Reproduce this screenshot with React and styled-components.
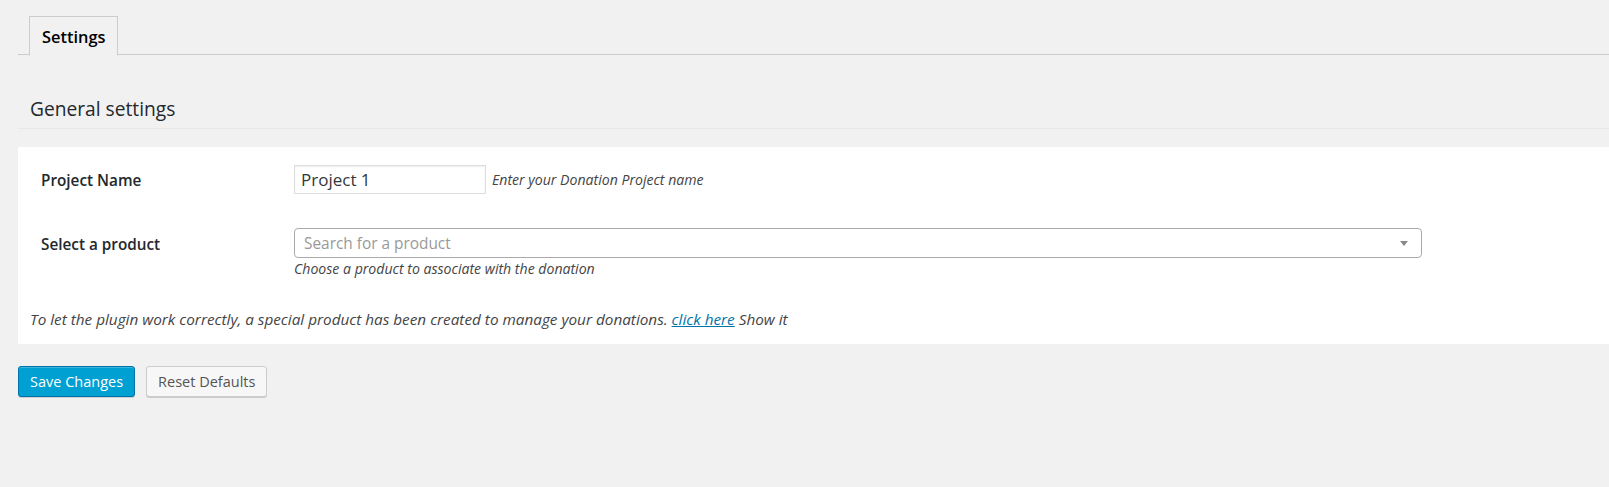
import styled, { createGlobalStyle } from "styled-components";

const GlobalStyle = createGlobalStyle`
  body {
    margin: 0;
    background: #f1f1f1;
    font-family: "Open Sans", "Liberation Sans", sans-serif;
    color: #23282d;
  }
`;

export default function App() {
  return (
    <Page>
      <GlobalStyle />
      <TabBar>
        <Tab $active>Settings</Tab>
      </TabBar>
      <SectionTitle>General settings</SectionTitle>
      <Panel>
        <FieldRow>
          <Label>Project Name</Label>
          <FieldCell>
            <TextInput defaultValue="Project 1" />
            <InlineHint>Enter your Donation Project name</InlineHint>
          </FieldCell>
        </FieldRow>
        <FieldRow $spaced>
          <Label $offset>Select a product</Label>
          <FieldColumn>
            <SelectBox>
              <Placeholder>Search for a product</Placeholder>
              <Arrow />
            </SelectBox>
            <Hint>Choose a product to associate with the donation</Hint>
          </FieldColumn>
        </FieldRow>
        <Notice>
          To let the plugin work correctly, a special product has been created
          to manage your donations. <Link href="#">click here</Link> Show it
        </Notice>
      </Panel>
      <Actions>
        <Button $primary>Save Changes</Button>
        <Button>Reset Defaults</Button>
      </Actions>
    </Page>
  );
}

const Page = styled.div`
  padding: 16px 0 40px 18px;
  min-height: 487px;
  box-sizing: border-box;
`;

const TabBar = styled.div`
  display: flex;
  padding-left: 11px;
  border-bottom: 1px solid #ccc;
  height: 38px;
`;

const Tab = styled.div`
  display: flex;
  align-items: center;
  padding: 0 12px;
  height: 38px;
  border: 1px solid #ccc;
  border-bottom: ${(p) => (p.$active ? "1px solid #f1f1f1" : "none")};
  background: ${(p) => (p.$active ? "#f1f1f1" : "#e5e5e5")};
  font-size: 16.4px;
  font-weight: 600;
  color: #000;
`;

const SectionTitle = styled.h2`
  margin: 40px 0 18px;
  padding: 0 0 6px 12px;
  font-size: 19.2px;
  line-height: 27px;
  font-weight: 400;
  color: #23282d;
  border-bottom: 1px solid #e8e8e8;
`;

const Panel = styled.div`
  background: #fff;
  padding: 18px 12px 15px;
`;

const FieldRow = styled.div`
  display: grid;
  grid-template-columns: 264px 1fr;
  align-items: ${(p) => (p.$spaced ? "start" : "center")};
  margin-top: ${(p) => (p.$spaced ? "34px" : "0")};
`;

const Label = styled.div`
  padding-left: 11px;
  font-size: 15.3px;
  font-weight: 600;
  color: #23282d;
  line-height: ${(p) => (p.$offset ? "32px" : "20px")};
`;

const FieldCell = styled.div`
  display: flex;
  align-items: center;
  gap: 6px;
`;

const FieldColumn = styled.div`
  display: flex;
  flex-direction: column;
`;

const TextInput = styled.input`
  box-sizing: border-box;
  width: 192px;
  height: 29px;
  border: 1px solid #ddd;
  box-shadow: inset 0 1px 2px rgba(0, 0, 0, 0.07);
  padding: 0 6px;
  font-family: inherit;
  font-size: 17px;
  color: #32373c;
  background: #fff;
  outline: none;
`;

const InlineHint = styled.span`
  font-size: 14.1px;
  font-style: italic;
  color: #444;
`;

const SelectBox = styled.div`
  box-sizing: border-box;
  width: 1128px;
  height: 30px;
  border: 1px solid #aaa;
  border-radius: 4px;
  display: flex;
  align-items: center;
  justify-content: space-between;
  padding: 0 13px 0 9px;
`;

const Placeholder = styled.span`
  font-size: 15.4px;
  color: #999;
`;

const Arrow = styled.span`
  width: 0;
  height: 0;
  border-left: 4px solid transparent;
  border-right: 4px solid transparent;
  border-top: 5px solid #888;
`;

const Hint = styled.div`
  margin-top: 1px;
  font-size: 14.1px;
  font-style: italic;
  line-height: 19px;
  color: #444;
`;

const Notice = styled.p`
  margin: 31px 0 0;
  font-size: 15.3px;
  font-style: italic;
  line-height: 20px;
  color: #444;
`;

const Link = styled.a`
  color: #0073aa;
  text-decoration: underline;
`;

const Actions = styled.div`
  display: flex;
  gap: 11px;
  margin-top: 22px;
`;

const Button = styled.button`
  height: 31px;
  padding: 0 11px;
  border-radius: 3px;
  font-family: inherit;
  font-size: 14.5px;
  border: 1px solid ${(p) => (p.$primary ? "#0073aa" : "#ccc")};
  background: ${(p) => (p.$primary ? "#00a0d2" : "#f7f7f7")};
  color: ${(p) => (p.$primary ? "#fff" : "#555")};
  box-shadow: ${(p) =>
    p.$primary ? "inset 0 1px 0 rgba(120,200,230,.5), 0 1px 0 rgba(0,0,0,.15)" : "0 1px 0 #ccc"};
  cursor: pointer;
`;
